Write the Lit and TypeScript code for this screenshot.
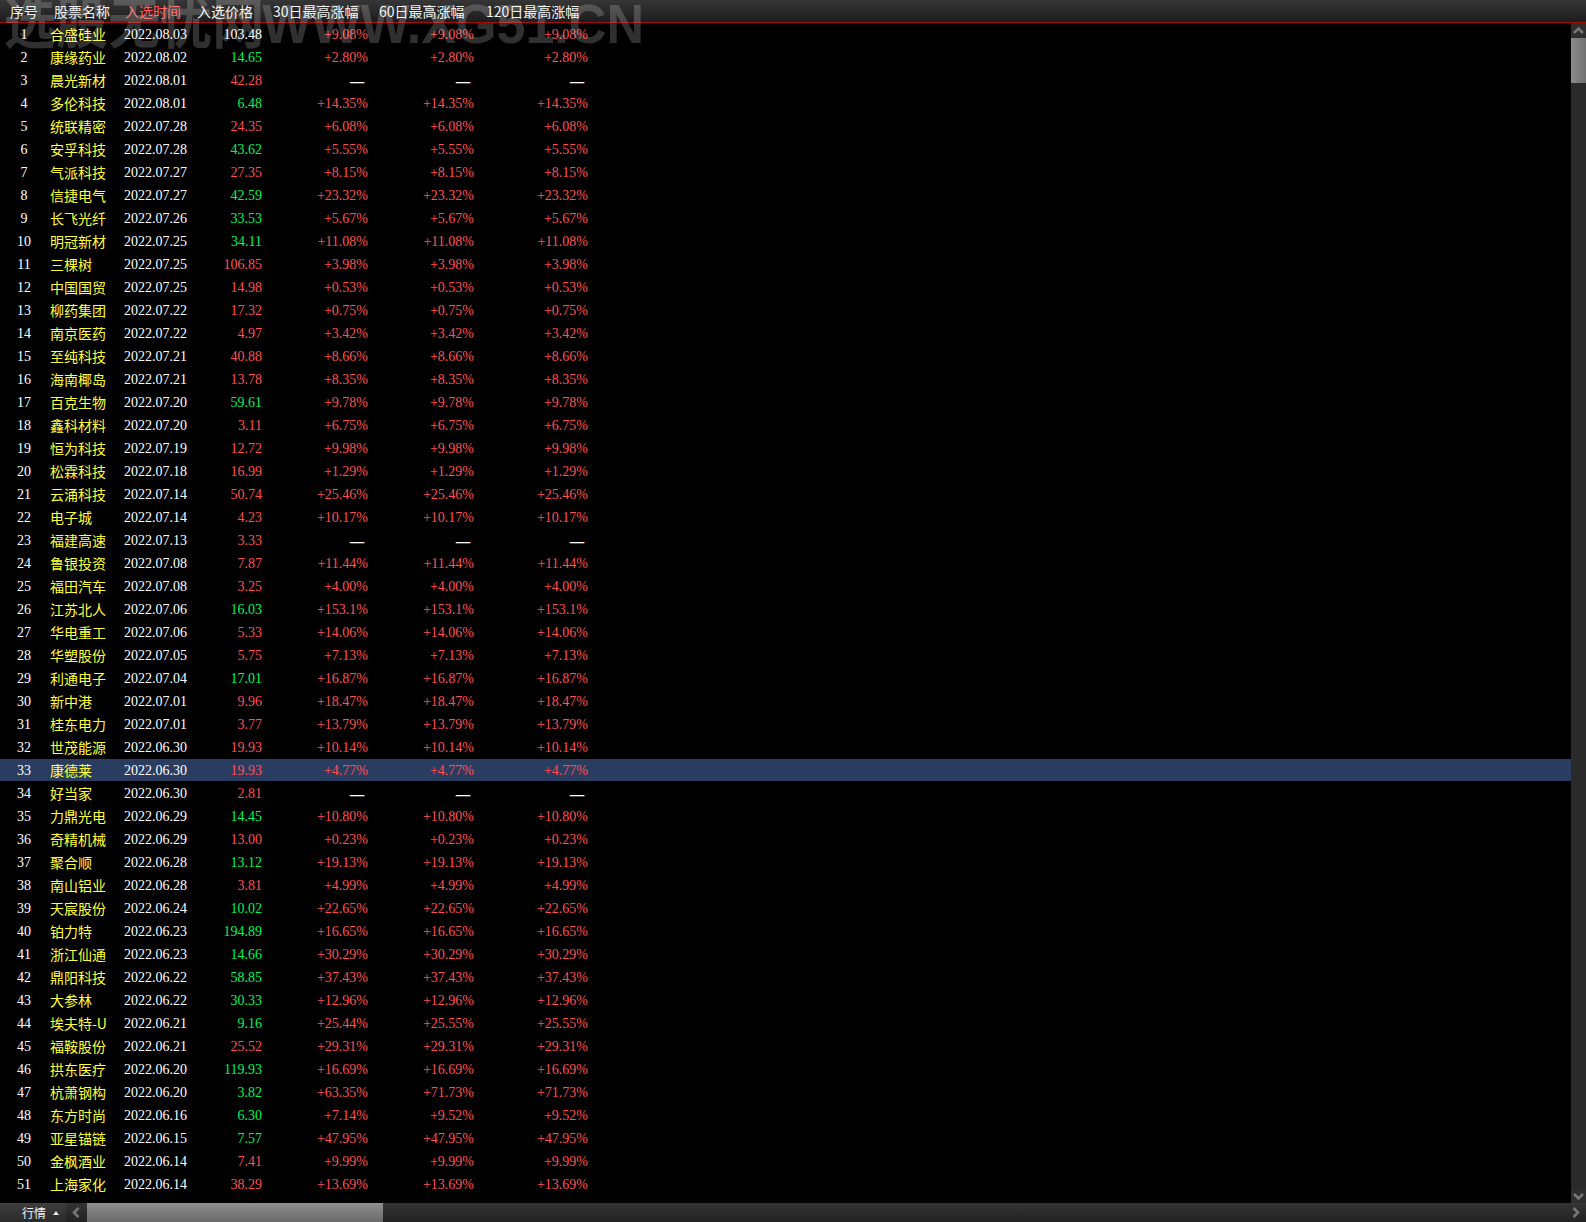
import { LitElement, html, css, svg } from "lit";
import { customElement } from "lit/decorators.js";

type Row = [string, string, string, string, string?, string?, string?];
// name, date, price, colour (r/g/w), 30d, 60d, 120d
const D: Row[] = [
  ["合盛硅业","2022.08.03","103.48","w","+9.08%"],
  ["康缘药业","2022.08.02","14.65","g","+2.80%"],
  ["晨光新材","2022.08.01","42.28","r","—"],
  ["多伦科技","2022.08.01","6.48","g","+14.35%"],
  ["统联精密","2022.07.28","24.35","r","+6.08%"],
  ["安孚科技","2022.07.28","43.62","g","+5.55%"],
  ["气派科技","2022.07.27","27.35","r","+8.15%"],
  ["信捷电气","2022.07.27","42.59","g","+23.32%"],
  ["长飞光纤","2022.07.26","33.53","g","+5.67%"],
  ["明冠新材","2022.07.25","34.11","g","+11.08%"],
  ["三棵树","2022.07.25","106.85","r","+3.98%"],
  ["中国国贸","2022.07.25","14.98","r","+0.53%"],
  ["柳药集团","2022.07.22","17.32","r","+0.75%"],
  ["南京医药","2022.07.22","4.97","r","+3.42%"],
  ["至纯科技","2022.07.21","40.88","r","+8.66%"],
  ["海南椰岛","2022.07.21","13.78","r","+8.35%"],
  ["百克生物","2022.07.20","59.61","g","+9.78%"],
  ["鑫科材料","2022.07.20","3.11","r","+6.75%"],
  ["恒为科技","2022.07.19","12.72","r","+9.98%"],
  ["松霖科技","2022.07.18","16.99","r","+1.29%"],
  ["云涌科技","2022.07.14","50.74","r","+25.46%"],
  ["电子城","2022.07.14","4.23","r","+10.17%"],
  ["福建高速","2022.07.13","3.33","r","—"],
  ["鲁银投资","2022.07.08","7.87","r","+11.44%"],
  ["福田汽车","2022.07.08","3.25","r","+4.00%"],
  ["江苏北人","2022.07.06","16.03","g","+153.1%"],
  ["华电重工","2022.07.06","5.33","r","+14.06%"],
  ["华塑股份","2022.07.05","5.75","r","+7.13%"],
  ["利通电子","2022.07.04","17.01","g","+16.87%"],
  ["新中港","2022.07.01","9.96","r","+18.47%"],
  ["桂东电力","2022.07.01","3.77","r","+13.79%"],
  ["世茂能源","2022.06.30","19.93","r","+10.14%"],
  ["康德莱","2022.06.30","19.93","r","+4.77%"],
  ["好当家","2022.06.30","2.81","r","—"],
  ["力鼎光电","2022.06.29","14.45","g","+10.80%"],
  ["奇精机械","2022.06.29","13.00","r","+0.23%"],
  ["聚合顺","2022.06.28","13.12","g","+19.13%"],
  ["南山铝业","2022.06.28","3.81","r","+4.99%"],
  ["天宸股份","2022.06.24","10.02","g","+22.65%"],
  ["铂力特","2022.06.23","194.89","g","+16.65%"],
  ["浙江仙通","2022.06.23","14.66","g","+30.29%"],
  ["鼎阳科技","2022.06.22","58.85","g","+37.43%"],
  ["大参林","2022.06.22","30.33","g","+12.96%"],
  ["埃夫特-U","2022.06.21","9.16","g","+25.44%","+25.55%","+25.55%"],
  ["福鞍股份","2022.06.21","25.52","r","+29.31%"],
  ["拱东医疗","2022.06.20","119.93","g","+16.69%"],
  ["杭萧钢构","2022.06.20","3.82","g","+63.35%","+71.73%","+71.73%"],
  ["东方时尚","2022.06.16","6.30","g","+7.14%","+9.52%","+9.52%"],
  ["亚星锚链","2022.06.15","7.57","g","+47.95%"],
  ["金枫酒业","2022.06.14","7.41","r","+9.99%"],
  ["上海家化","2022.06.14","38.29","r","+13.69%"],
];

const HEAD = ["序号","股票名称","入选时间","入选价格","30日最高涨幅","60日最高涨幅","120日最高涨幅"];

const chevron = (d: string, w = 11, h = 11) => html`<svg width=${w} height=${h} viewBox="0 0 11 11" aria-hidden="true">${svg`<path d=${d} fill="none" stroke="#767676" stroke-width="2.6"/>`}</svg>`;

@customElement("app-root")
export class AppRoot extends LitElement {
  static styles = css`
    :host { display: block; width: 1586px; height: 1222px; background: #000; overflow: hidden; position: relative; }
    .app { display: flex; flex-direction: column; height: 1222px; }
    .head {
      flex: none; height: 22px; border-bottom: 1px solid #a80a0a;
      background: linear-gradient(#363636, #1c1c1c);
      display: grid; grid-template-columns: 44px 71px 72px 76px 106px 107px 1fr;
      padding-left: 10px; align-items: center;
      font: 14px/22px "Noto Sans CJK SC", "Noto Sans", sans-serif; color: #f2f2f2;
    }
    .head .sel { color: #ff5a5a; }
    .main { flex: 1; display: flex; min-height: 0; }
    .table { flex: 1; overflow: hidden; min-width: 0; }
    .row {
      height: 23px; box-sizing: border-box; border-bottom: 1px solid transparent; background-clip: padding-box;
      display: grid; grid-template-columns: 48px 76px 78px 60px 106px 106px 114px 1fr;
      align-items: start;
      font: 14px/24px "Liberation Serif", "Noto Sans CJK SC", serif; color: #fff;
    }
    .row.on { background-color: #2a3d61; }
    .seq { text-align: center; }
    .name { padding-left: 2px; color: #ffff3c; font: 14px/22px "Noto Sans CJK SC", "Noto Sans", sans-serif; white-space: nowrap; }
    .num { text-align: right; }
    .dash { padding-right: 3px; font: 18px/22px "Noto Sans CJK SC", sans-serif; color: #fff; }
    .r { color: #ff5050; }
    .g { color: #00f558; }
    .w { color: #fff; }
    .vbar { flex: none; width: 15px; display: flex; flex-direction: column; background: #2a2a2a; }
    .vbtn { flex: none; height: 15px; display: flex; align-items: center; justify-content: center; background: #2e2e2e; }
    .vthumb { flex: none; height: 45px; background: linear-gradient(90deg, #8c8c8c, #707070); }
    .vtrack { flex: 1; }
    .vbtn.down { height: 14px; }
    .bottom { flex: none; height: 19px; display: flex; background: linear-gradient(#343434, #222); }
    .tab {
      flex: none; width: 66px; box-sizing: border-box; padding-left: 22px; display: flex; align-items: center; gap: 7px;
      background: linear-gradient(#3e3e3e, #2a2a2a);
      font: 12px/19px "Noto Sans CJK SC", sans-serif; color: #f4f4f4;
    }
    .caret { width: 0; height: 0; border: 3.5px solid transparent; border-top: 0; border-bottom: 4px solid #e6e6e6; }
    .hbtn { flex: none; width: 21px; display: flex; align-items: center; justify-content: center; }
    .hthumb { flex: none; width: 296px; background: linear-gradient(#8e8e8e, #6a6a6a); }
    .htrack { flex: 1; }
    .mark {
      position: absolute; left: 4px; top: -4px; white-space: nowrap; pointer-events: none;
      font: bold 56px/56px "Liberation Sans", "Noto Sans CJK SC", sans-serif; color: rgba(255,255,255,.19);
      word-spacing: -18px; transform: scaleX(.93); transform-origin: left top;
    }
  `;

  render() {
    return html`
      <div class="app">
        <div class="head">${HEAD.map((h, i) => html`<span class=${i === 2 ? "sel" : ""}>${h}</span>`)}</div>
        <div class="main">
          <div class="table">
            ${D.map((d, i) => {
              const a = d[4] as string, b = d[5] ?? a, c = d[6] ?? a;
              const cl = (v: string) => "num " + (v === "—" ? "dash" : "r");
              return html`<div class="row ${i === 32 ? "on" : ""}">
                <span class="seq">${i + 1}</span>
                <span class="name">${d[0]}</span>
                <span>${d[1]}</span>
                <span class="num ${d[3]}">${d[2]}</span>
                <span class=${cl(a)}>${a}</span>
                <span class=${cl(b)}>${b}</span>
                <span class=${cl(c)}>${c}</span>
              </div>`;
            })}
          </div>
          <div class="vbar">
            <div class="vbtn">${chevron("M1 8 L5.5 3.5 L10 8")}</div>
            <div class="vthumb"></div>
            <div class="vtrack"></div>
            <div class="vbtn down">${chevron("M1 3 L5.5 7.5 L10 3")}</div>
          </div>
        </div>
        <div class="bottom">
          <div class="tab"><span>行情</span><span class="caret"></span></div>
          <div class="hbtn">${chevron("M7.5 1 L3 5.5 L7.5 10")}</div>
          <div class="hthumb"></div>
          <div class="htrack"></div>
          <div class="hbtn">${chevron("M3.5 1 L8 5.5 L3.5 10")}</div>
        </div>
      </div>
      <div class="mark">选股无忧网 WWW.XG51.CN</div>
    `;
  }
}
